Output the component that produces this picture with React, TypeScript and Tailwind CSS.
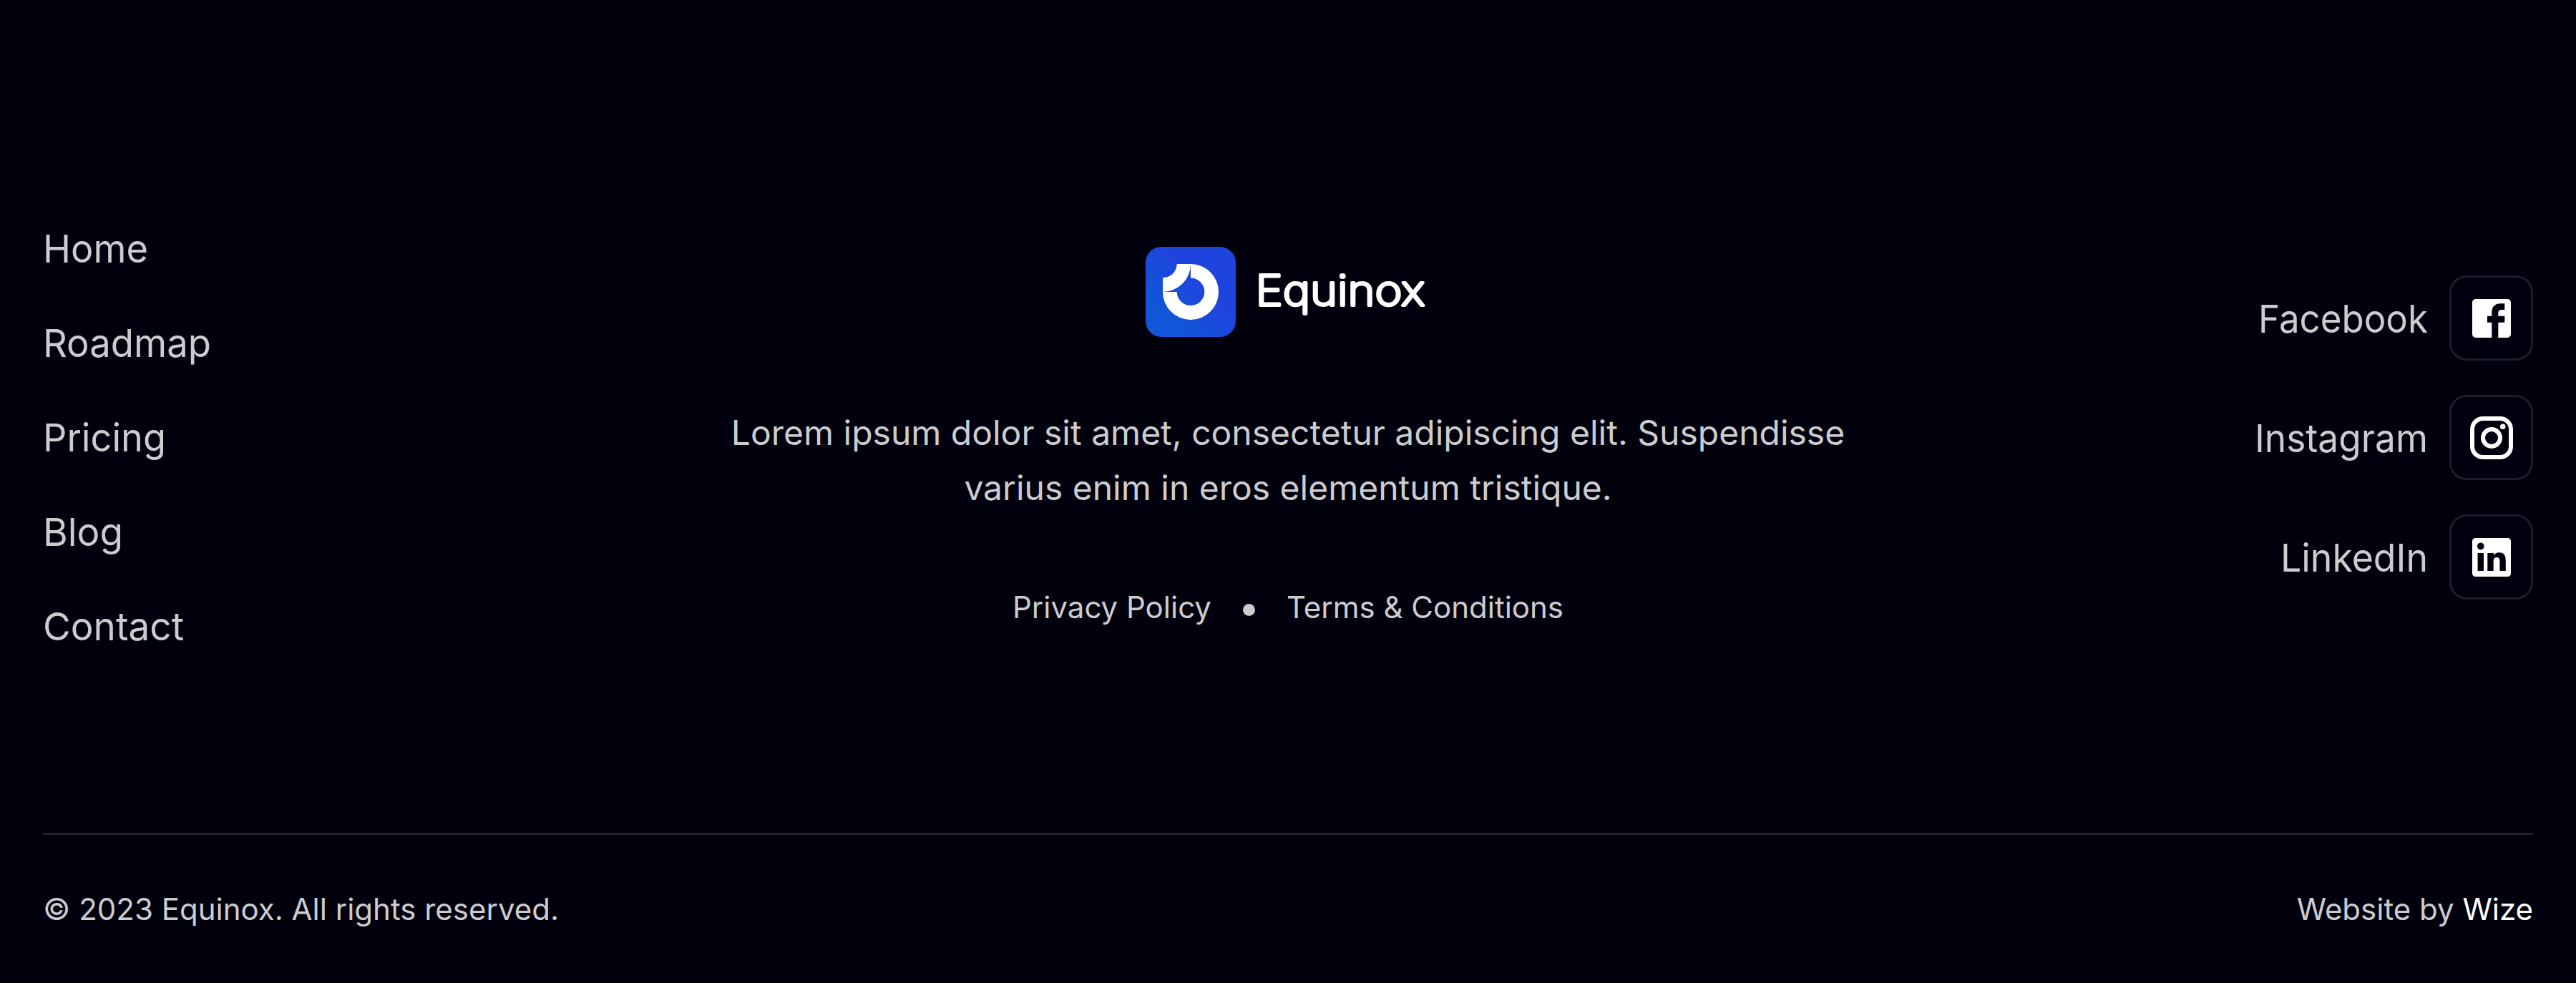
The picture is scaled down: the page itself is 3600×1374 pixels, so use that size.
const nav = [
  { label: 'Home', width: 147 },
  { label: 'Roadmap', width: 235 },
  { label: 'Pricing', width: 172 },
  { label: 'Blog', width: 112 },
  { label: 'Contact', width: 197 },
];

function Logo() {
  return (
    <svg className="h-[126px] w-[399px]" viewBox="0 0 399 126" role="img">
      <defs>
        <linearGradient id="tile" x1="0" y1="1" x2="1" y2="0">
          <stop offset="0.25" stopColor="#1155d8" />
          <stop offset="0.6" stopColor="#1f44de" />
        </linearGradient>
      </defs>
      <rect width="126" height="126" rx="22" fill="url(#tile)" />
      <path
        fill="#fff"
        d="M43.7 24H63A39.3 39.3 0 0 1 24 63V43.3A19.6 19.6 0 0 0 43.7 24ZM63 24A39 39 0 1 1 24 63H43.7A19.3 19.3 0 1 0 63 43.5Z"
      />
      <text
        x="153.5"
        y="82"
        fontFamily="Inter, sans-serif"
        fontSize="59"
        fontWeight="200"
        fill="#fff"
        stroke="#fff"
        strokeWidth="3.8"
        strokeLinejoin="round"
        textLength="237"
        lengthAdjust="spacingAndGlyphs"
      >
        Equinox
      </text>
    </svg>
  );
}

const icons = {
  Facebook: (
    <path d="M19.4 3H4.6A1.6 1.6 0 0 0 3 4.600v14.800A1.600 1.600 0 0 0 4.600 21H12.100v-7.050H10v-3h2.100V9.200c0-2.600 1.500-4.150 4-4.150h2v2.950h-1.400c-1.100 0-1.600.5-1.600 1.500v1.450h3v3h-3V21h4.300A1.600 1.600 0 0 0 21 19.400V4.600A1.600 1.600 0 0 0 19.400 3Z" />
  ),
  Instagram: (
    <path
      fillRule="evenodd"
      d="M8 2h8a6 6 0 0 1 6 6v8a6 6 0 0 1-6 6H8a6 6 0 0 1-6-6V8a6 6 0 0 1 6-6Zm0 2a4 4 0 0 0-4 4v8a4 4 0 0 0 4 4h8a4 4 0 0 0 4-4V8a4 4 0 0 0-4-4ZM12 7a5 5 0 1 1 0 10 5 5 0 0 1 0-10Zm0 2a3 3 0 1 0 0 6 3 3 0 0 0 0-6ZM17.25 5.500a1.250 1.250 0 1 1 0 2.500 1.250 1.250 0 0 1 0-2.500Z"
    />
  ),
  LinkedIn: (
    <path
      fillRule="evenodd"
      d="M4.500 3h15A1.500 1.500 0 0 1 21 4.500v15a1.500 1.500 0 0 1-1.500 1.500h-15A1.500 1.500 0 0 1 3 19.500v-15A1.500 1.500 0 0 1 4.500 3ZM5.520 9.980V18.340H8.340V9.980ZM6.930 5.200a1.620 1.620 0 1 0 0 3.240 1.620 1.620 0 0 0 0-3.240ZM10.100 9.980V18.340H12.890V14.200C12.890 13.100 13.100 12.040 14.460 12.040 15.800 12.040 15.820 13.300 15.820 14.270V18.340H18.600V13.750C18.600 11.500 18.120 9.770 15.490 9.770 14.220 9.770 13.370 10.460 13.020 11.120H12.980V9.980Z"
    />
  ),
};

const socials: { label: keyof typeof icons; width: number }[] = [
  { label: 'Facebook', width: 237 },
  { label: 'Instagram', width: 242 },
  { label: 'LinkedIn', width: 206 },
];

function Label({ text, width }: { text: string; width: number }) {
  return (
    <svg className="h-[78px] overflow-visible" width={width} viewBox={`0 0 ${width} 78`}>
      <text
        x="0"
        y="59"
        textLength={width}
        lengthAdjust="spacingAndGlyphs"
        fontFamily="Inter, sans-serif"
        fontSize="54"
        fill="#cccccf"
      >
        {text}
      </text>
    </svg>
  );
}

export default function App() {
  return (
    <footer className="flex h-[1374px] w-[3600px] flex-col border-b border-black bg-[#01000d] px-[60px] font-['Inter',sans-serif] text-[#cccccf]">
      <div className="grid h-[1164px] grid-cols-[600px_1fr_600px]">
        <nav className="flex flex-col gap-[54px] pt-[308px]">
          {nav.map((n) => (
            <a key={n.label} className="block h-[78px]">
              <Label text={n.label} width={n.width} />
            </a>
          ))}
        </nav>
        <div className="flex flex-col items-center pt-[345px]">
          <Logo />
          <p className="mt-[96px] w-[1620px] text-center text-[48px] leading-[76.8px]">
            Lorem ipsum dolor sit amet, consectetur adipiscing elit. Suspendisse varius enim in eros elementum tristique.
          </p>
          <div className="mt-[94px] flex items-center text-[42px] leading-[67px]">
            <a>Privacy Policy</a>
            <span className="mx-[44px] mt-[8px] size-[17px] rounded-full bg-[#cccccf]" />
            <a>Terms &amp; Conditions</a>
          </div>
        </div>
        <div className="flex flex-col items-end gap-[48px] pt-[385px]">
          {socials.map((s) => (
            <a key={s.label} className="flex items-center gap-[30px]">
              <Label text={s.label} width={s.width} />
              <span className="grid h-[119px] w-[117px] place-items-center rounded-[24px] border-[3px] border-[#1e1d29] bg-[#02000f]">
                <svg viewBox="0 0 24 24" className="size-[72px] fill-white">
                  {icons[s.label]}
                </svg>
              </span>
            </a>
          ))}
        </div>
      </div>
      <div className="flex justify-between border-t-[3px] border-[#21202b] pt-[70px] text-[42px] leading-[67px]">
        <p>© 2023 Equinox. All rights reserved.</p>
        <p>
          Website by <a className="text-white">Wize</a>
        </p>
      </div>
    </footer>
  );
}
